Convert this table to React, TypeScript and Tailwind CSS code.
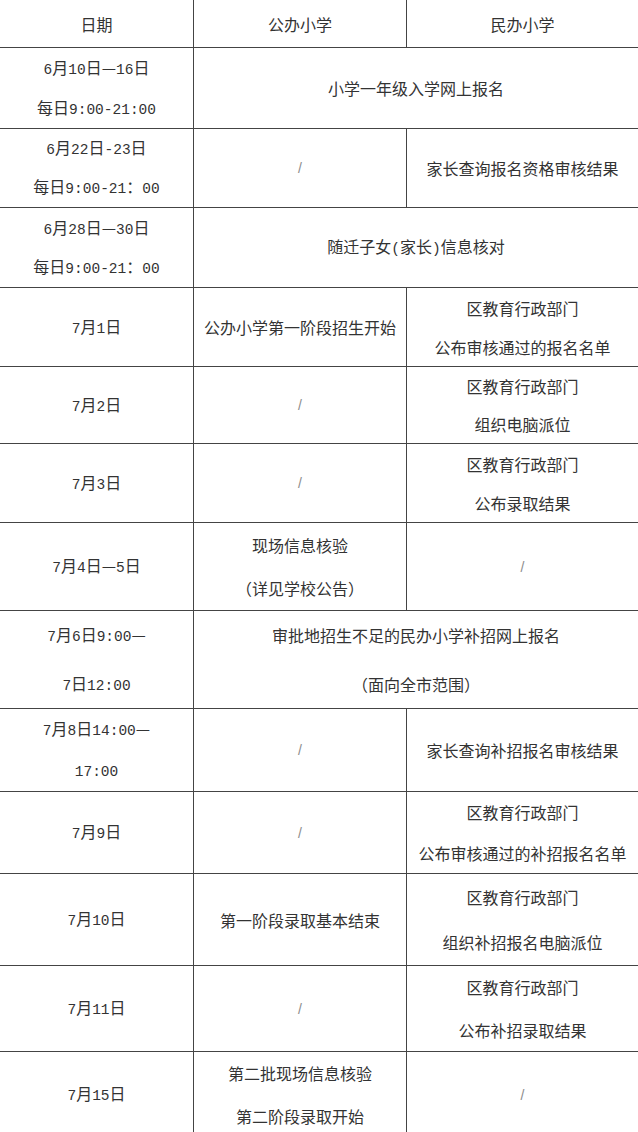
import React from 'react';

type Cell = string | string[] | null;

interface RowData {
  h: string;
  date: Cell;
  pub: Cell;
  priv?: Cell;
  span?: boolean;
}

// null = the grey slash placeholder
const rows: RowData[] = [
  { h: 'h-[81px]', date: ['6月10日—16日', '每日9:00-21:00'], pub: '小学一年级入学网上报名', span: true },
  { h: 'h-[79px]', date: ['6月22日-23日', '每日9:00-21：00'], pub: null, priv: '家长查询报名资格审核结果' },
  { h: 'h-[80px]', date: ['6月28日—30日', '每日9:00-21：00'], pub: '随迁子女(家长)信息核对', span: true },
  { h: 'h-[79px]', date: '7月1日', pub: '公办小学第一阶段招生开始', priv: ['区教育行政部门', '公布审核通过的报名名单'] },
  { h: 'h-[77px]', date: '7月2日', pub: null, priv: ['区教育行政部门', '组织电脑派位'] },
  { h: 'h-[79px]', date: '7月3日', pub: null, priv: ['区教育行政部门', '公布录取结果'] },
  { h: 'h-[88px]', date: '7月4日—5日', pub: ['现场信息核验', '（详见学校公告）'], priv: null },
  { h: 'h-[98px]', date: ['7月6日9:00—', '7日12:00'], pub: ['审批地招生不足的民办小学补招网上报名', '（面向全市范围）'], span: true },
  { h: 'h-[83px]', date: ['7月8日14:00—', '17:00'], pub: null, priv: '家长查询补招报名审核结果' },
  { h: 'h-[82px]', date: '7月9日', pub: null, priv: ['区教育行政部门', '公布审核通过的补招报名名单'] },
  { h: 'h-[92px]', date: '7月10日', pub: '第一阶段录取基本结束', priv: ['区教育行政部门', '组织补招报名电脑派位'] },
  { h: 'h-[86px]', date: '7月11日', pub: null, priv: ['区教育行政部门', '公布补招录取结果'] },
  { h: 'h-[86px]', date: '7月15日', pub: ['第二批现场信息核验', '第二阶段录取开始'], priv: null },
];

// digits and latin punctuation come out narrower, like the original's songti numerals
function Txt({ s }: { s: string }) {
  const parts = s.match(/[\x20-\x7e]+|[^\x20-\x7e]+/g) ?? [];
  return (
    <span className="whitespace-nowrap">
      {parts.map((p, i) =>
        /[\x20-\x7e]/.test(p[0]) ? (
          <span key={i} className="font-['Liberation_Mono',monospace] text-[14.5px]">
            {p}
          </span>
        ) : (
          <span key={i}>{p}</span>
        )
      )}
    </span>
  );
}

function CellBody({ c }: { c: Cell }) {
  if (c === null) {
    return <span className="font-['Liberation_Sans',sans-serif] text-[14px] text-[#8c8c8c]">/</span>;
  }
  if (Array.isArray(c)) {
    return (
      <div className="flex h-full flex-col items-center justify-around">
        {c.map((line) => (
          <Txt key={line} s={line} />
        ))}
      </div>
    );
  }
  return <Txt s={c} />;
}

export default function App() {
  return (
    <div className="h-[1132px] w-[638px] overflow-hidden bg-white font-['Noto_Sans_CJK_SC','Noto_Sans',sans-serif] text-[16px] leading-none text-[#333]">
      <div className="flex h-[48px] border-b border-[#444]">
        <div className="flex w-[194px] items-center justify-center border-r border-[#444]">日期</div>
        <div className="flex w-[213px] items-center justify-center border-r border-[#444]">公办小学</div>
        <div className="flex flex-1 items-center justify-center">民办小学</div>
      </div>
      {rows.map((r, i) => (
        <div key={i} className={`flex ${r.h} border-b border-[#444]`}>
          <div className="flex w-[194px] items-center justify-center border-r border-[#444]">
            <CellBody c={r.date} />
          </div>
          {r.span ? (
            <div className="flex flex-1 items-center justify-center">
              <CellBody c={r.pub} />
            </div>
          ) : (
            <>
              <div className="flex w-[213px] items-center justify-center border-r border-[#444]">
                <CellBody c={r.pub} />
              </div>
              <div className="flex flex-1 items-center justify-center">
                <CellBody c={r.priv ?? null} />
              </div>
            </>
          )}
        </div>
      ))}
    </div>
  );
}
